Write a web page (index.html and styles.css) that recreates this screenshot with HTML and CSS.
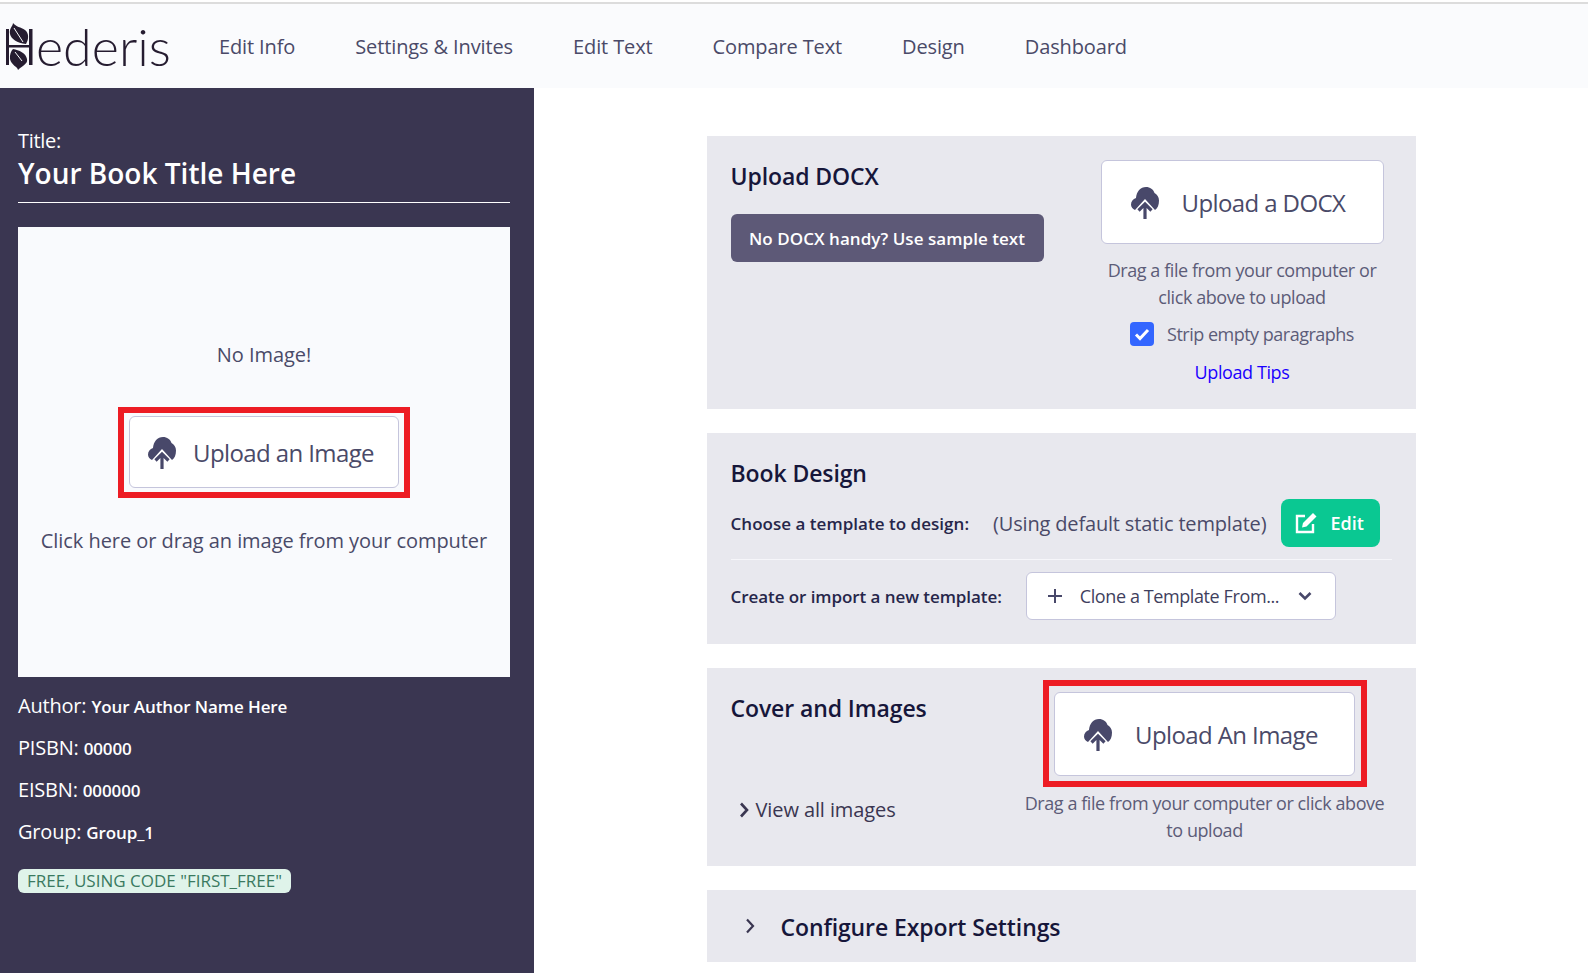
FILE: index.html
```html
<!DOCTYPE html>
<html lang="en">
<head>
  <meta charset="UTF-8">
  <meta name="viewport" content="width=device-width, initial-scale=1.0">
  <title>Hederis</title>
  <link rel="stylesheet" href="styles.css">
</head>
<body>

  <svg class="sprite" width="0" height="0">
    <symbol id="cloud" viewBox="0 0 28 33">
      <path d="M4 24C1.500 23 0 21 0 18.500 0 15.500 2 13 5 12 5.500 5.500 9.500 1 15 1c4 0 7.500 2.500 8.500 6C26 8.500 28 11 28 14.500 28 19 26.500 22.500 24 24L14 13z"/>
      <path d="M14 33V18M7.500 24.500L14 18l6.500 6.500" fill="none" stroke="#48486a" stroke-width="3.200"/>
    </symbol>
  </svg>

  <div class="top-line"></div>

  <header class="navbar">
    <a class="logo" href="#">
      <svg class="logo-mark" viewBox="0 0 27 47" width="27" height="47">
        <rect x="0" y="6" width="3" height="36"/>
        <rect x="23" y="6" width="3.500" height="36"/>
        <rect x="0" y="22" width="26" height="2.500"/>
        <path d="M7 0C7 3 3 5 4 11 5 16 11 20 20 21 23 16 23 10 19 7 15 4 10 4 7 0z"/>
        <path d="M12 47C12 44 5 42 4 36 3.500 32 5 28 7 26 13 27 20 30 21 36 22 41 17 42 12 47z"/>
        <path d="M8 5l9 14M9 29l7 9" stroke="#fafbfd" stroke-width="1" fill="none"/>
      </svg>
      <span class="logo-text">ederis</span>
    </a>
    <nav class="nav-links">
      <a href="#">Edit Info</a>
      <a href="#">Settings &amp; Invites</a>
      <a href="#">Edit Text</a>
      <a href="#">Compare Text</a>
      <a href="#">Design</a>
      <a href="#">Dashboard</a>
    </nav>
  </header>

  <div class="page">
    <aside class="sidebar">
      <p class="title-label">Title:</p>
      <h1 class="book-title">Your Book Title Here</h1>

      <div class="cover-box">
        <p>No Image!</p>
        <div class="highlight highlight-small">
          <button class="upload-btn upload-small">
            <svg class="cloud-icon"><use href="#cloud"/></svg>
            Upload an Image
          </button>
        </div>
        <p>Click here or drag an image from your computer</p>
      </div>

      <p class="meta">Author: <b>Your Author Name Here</b></p>
      <p class="meta">PISBN: <b>00000</b></p>
      <p class="meta">EISBN: <b>000000</b></p>
      <p class="meta">Group: <b>Group_1</b></p>
      <span class="badge">FREE, USING CODE "FIRST_FREE"</span>
    </aside>

    <main class="content">
      <section class="card card-upload">
        <div class="col-left">
          <h2>Upload DOCX</h2>
          <button class="sample-btn">No DOCX handy? Use sample text</button>
        </div>
        <div class="col-right docx-col">
          <button class="upload-btn upload-docx">
            <svg class="cloud-icon"><use href="#cloud"/></svg>
            Upload a DOCX
          </button>
          <p class="hint">Drag a file from your computer or click above to upload</p>
          <label class="strip">
            <span class="checkbox">
              <svg viewBox="0 0 24 24" width="24" height="24"><path d="M6 12.500l4 4 8-8.500" fill="none" stroke="#fff" stroke-width="3"/></svg>
            </span>
            Strip empty paragraphs
          </label>
          <a class="tips" href="#">Upload Tips</a>
        </div>
      </section>

      <section class="card card-design">
        <h2>Book Design</h2>
        <div class="design-row row-first">
          <span class="design-label">Choose a template to design:</span>
          <span class="using">(Using default static template)</span>
          <button class="edit-btn">
            <svg viewBox="0 0 24 24" width="24" height="24">
              <path d="M11 5H3v16h16v-8" fill="none" stroke="#fff" stroke-width="2.400"/>
              <path d="M19 2l3.500 3.500-10 10-4.500 1 1-4.500z" fill="#fff"/>
            </svg>
            Edit
          </button>
        </div>
        <div class="design-row row-second">
          <span class="design-label">Create or import a new template:</span>
          <button class="clone-btn">
            <svg viewBox="0 0 16 16" width="16" height="16"><path d="M8 1v14M1 8h14" stroke="#48486a" stroke-width="2" fill="none"/></svg>
            <span>Clone a Template From...</span>
            <svg viewBox="0 0 14 14" width="14" height="14"><path d="M1.500 4l5.500 5.500L12.500 4" stroke="#48486a" stroke-width="2.600" fill="none"/></svg>
          </button>
        </div>
      </section>

      <section class="card card-cover">
        <div class="col-left cover-left">
          <h2>Cover and Images</h2>
          <a class="view-all" href="#">
            <svg viewBox="0 0 10 16" width="10" height="16"><path d="M2 1.500l6 6.500-6 6.500" stroke="#3a3651" stroke-width="2.600" fill="none"/></svg>
            View all images
          </a>
        </div>
        <div class="col-right cover-col">
          <div class="highlight highlight-big">
            <button class="upload-btn upload-big">
              <svg class="cloud-icon"><use href="#cloud"/></svg>
              Upload An Image
            </button>
          </div>
          <p class="hint">Drag a file from your computer or click above to upload</p>
        </div>
      </section>

      <section class="card card-export">
        <svg viewBox="0 0 10 16" width="10" height="16"><path d="M2 1.500l6 6.500-6 6.500" stroke="#3a3651" stroke-width="2.200" fill="none"/></svg>
        <h2>Configure Export Settings</h2>
      </section>
    </main>
  </div>

</body>
</html>
```

FILE: styles.css
```css
* {
  margin: 0;
  padding: 0;
  box-sizing: border-box;
}

body {
  font-family: "Open Sans", "Noto Sans", sans-serif;
  background-color: #fff;
  color: #4a4a68;
  height: 973px;
  overflow: hidden;
}

a {
  text-decoration: none;
}

button {
  font-family: inherit;
  cursor: pointer;
}

.sprite {
  position: absolute;
}

.top-line {
  height: 4px;
  background-color: #fff;
  border-bottom: 2px solid #dcdcdc;
}

/* navbar */
.navbar {
  height: 84px;
  background-color: #fafbfd;
  display: flex;
  align-items: center;
}

.logo {
  display: flex;
  align-items: center;
  width: 190px;
  padding-left: 6px;
  color: #251c30;
}

.logo-mark {
  fill: #251c30;
  flex-shrink: 0;
}

.logo-text {
  font-family: Lato, sans-serif;
  font-weight: 300;
  font-size: 52px;
  line-height: 60px;
  margin-left: 3px;
}

.nav-links {
  display: flex;
  gap: 60px;
  padding: 1px 0 0 29px;
}

.nav-links a {
  font-size: 20px;
  letter-spacing: -0.12px;
  color: #4a4a68;
}

/* sidebar */
.page {
  display: flex;
  height: 885px;
}

.sidebar {
  width: 534px;
  flex-shrink: 0;
  background-color: #3a3651;
  color: #fff;
  padding: 41px 24px 0 18px;
}

.title-label {
  font-size: 20px;
  line-height: 24px;
  letter-spacing: -0.3px;
}

.book-title {
  font-size: 28px;
  font-weight: 600;
  line-height: 40px;
  padding-bottom: 9px;
  border-bottom: 1px solid #fff;
  margin-bottom: 24px;
}

.cover-box {
  height: 450px;
  background-color: #f9fafd;
  color: #4a4a68;
  display: flex;
  flex-direction: column;
  align-items: center;
  justify-content: center;
  font-size: 20px;
  letter-spacing: -0.06px;
  padding-bottom: 10px;
}

.highlight {
  border: 6px solid #ed1c24;
  display: flex;
  flex-shrink: 0;
  align-items: center;
  justify-content: center;
}

.highlight-small {
  width: 292px;
  height: 91px;
  margin: 39px 0 29px;
}

.highlight-big {
  width: 324px;
  height: 107px;
}

.upload-btn {
  display: flex;
  align-items: center;
  background-color: #fff;
  border: 1px solid #c5c5dc;
  border-radius: 6px;
  color: #4a4a68;
  font-size: 24px;
  letter-spacing: -0.6px;
}

.cloud-icon {
  width: 28px;
  height: 33px;
  fill: #48486a;
  flex-shrink: 0;
}

.upload-small {
  width: 270px;
  height: 72px;
  padding-left: 18px;
  gap: 17px;
}

.upload-docx {
  width: 283px;
  height: 84px;
  padding-left: 29px;
  gap: 23px;
}

.upload-big {
  width: 301px;
  height: 84px;
  padding: 2px 0 0 29px;
  gap: 23px;
}

.meta {
  height: 42px;
  font-size: 20px;
  line-height: 42px;
  letter-spacing: -0.2px;
}

.sidebar .cover-box + .meta {
  margin-top: 8px;
}

.meta b {
  font-size: 17px;
  font-weight: 600;
  letter-spacing: -0.1px;
}

.badge {
  display: inline-block;
  margin-top: 16px;
  height: 24px;
  line-height: 24px;
  padding: 0 9px;
  background-color: #dff3ea;
  color: #3a7a5f;
  border-radius: 6px;
  font-size: 17px;
  white-space: nowrap;
}

/* main column */
.content {
  flex: 1;
  display: flex;
  flex-direction: column;
  align-items: center;
  gap: 24px;
  padding-top: 48px;
}

.card {
  width: 709px;
  background-color: #e8e8ee;
  padding: 24px;
}

.card h2 {
  font-size: 23px;
  font-weight: 600;
  line-height: 32px;
  letter-spacing: -0.1px;
  color: #16163a;
}

.card-upload {
  height: 273px;
  display: flex;
  justify-content: space-between;
}

.sample-btn {
  display: block;
  width: 313px;
  height: 48px;
  margin-top: 22px;
  background-color: #5d5977;
  color: #fff;
  border: none;
  border-radius: 6px;
  font-size: 17px;
  font-weight: 600;
  letter-spacing: 0.05px;
}

.col-right {
  display: flex;
  flex-direction: column;
  align-items: center;
}

.docx-col {
  width: 283px;
  margin-right: 8px;
}

.hint {
  font-size: 18px;
  line-height: 27px;
  letter-spacing: -0.43px;
  text-align: center;
  color: #5c5c78;
}

.docx-col .hint {
  margin-top: 13px;
}

.strip {
  display: flex;
  align-items: center;
  gap: 13px;
  font-size: 18px;
  letter-spacing: -0.5px;
  color: #5c5c78;
  margin-top: 11px;
}

.checkbox {
  width: 24px;
  height: 24px;
  background-color: #3366ff;
  border-radius: 4px;
  display: block;
}

.tips {
  color: #1a00ff;
  font-size: 18px;
  letter-spacing: -0.4px;
  margin-top: 14px;
}

.card-design {
  height: 211px;
}

.design-row {
  display: flex;
  align-items: center;
}

.design-label {
  font-size: 17px;
  font-weight: 600;
  letter-spacing: 0.03px;
  color: #26264a;
}

.row-first {
  height: 48px;
  margin-top: 10px;
}

.using {
  font-size: 20px;
  letter-spacing: -0.17px;
  margin-left: 24px;
  padding-top: 1px;
}

.edit-btn {
  display: flex;
  align-items: center;
  gap: 12px;
  width: 99px;
  height: 48px;
  margin-left: 15px;
  padding-left: 13px;
  background-color: #0ac892;
  color: #fff;
  border: none;
  border-radius: 8px;
  font-size: 18px;
  font-weight: 600;
}

.row-second {
  margin-top: 12px;
  padding-top: 12px;
  border-top: 1px solid #f6f6fa;
  gap: 24px;
}

.row-second .design-label {
  letter-spacing: -0.07px;
}

.clone-btn {
  display: flex;
  align-items: center;
  width: 310px;
  height: 48px;
  padding: 0 20px;
  background-color: #fff;
  border: 1px solid #c5c5dc;
  border-radius: 6px;
  color: #3f3f5e;
  font-size: 18px;
  letter-spacing: -0.4px;
}

.clone-btn span {
  margin: 0 19px 0 17px;
  white-space: nowrap;
}

.card-cover {
  height: 198px;
  padding-top: 12px;
  display: flex;
  justify-content: space-between;
}

.cover-left h2 {
  margin-top: 12px;
}

.view-all {
  display: flex;
  align-items: center;
  gap: 7px;
  margin-top: 72px;
  padding-left: 8px;
  font-size: 20px;
  letter-spacing: -0.1px;
  color: #3a3651;
}

.cover-col {
  width: 370px;
  margin-right: 2px;
}

.cover-col .hint {
  margin-top: 3px;
}

.card-export {
  height: 72px;
  padding: 0 0 0 38px;
  display: flex;
  align-items: center;
  gap: 26px;
}

.card-export h2 {
  margin-top: 2px;
}
```
